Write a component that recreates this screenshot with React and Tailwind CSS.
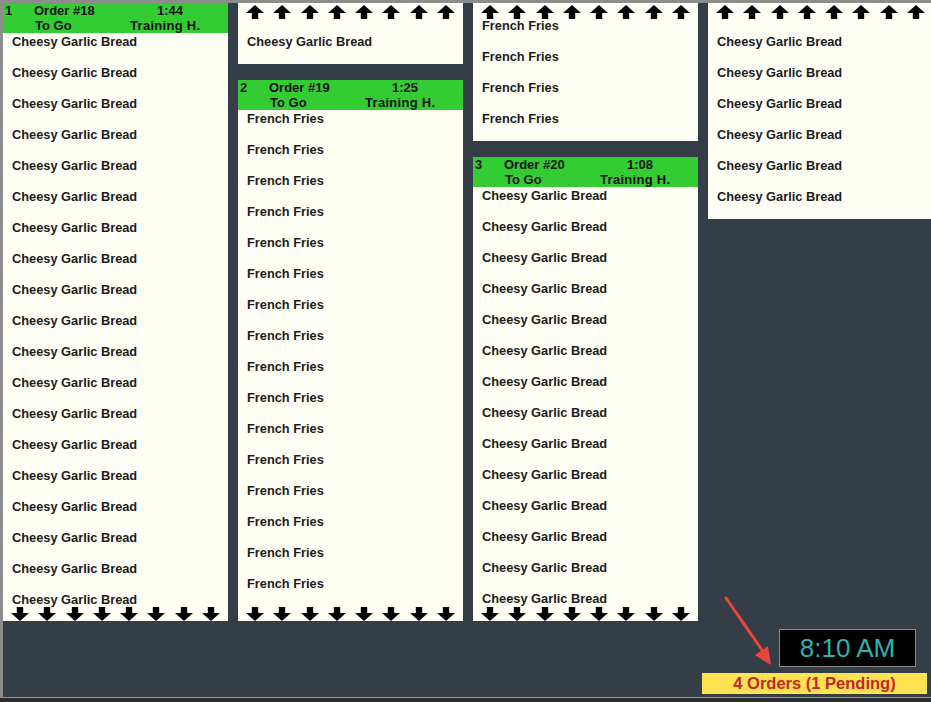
import React from 'react';

const ITEM_CGB = 'Cheesy Garlic Bread';
const ITEM_FF = 'French Fries';

const Arrow = ({ down }) => (
  <svg width="18" height="14" viewBox="0 0 18 14" className={down ? 'rotate-180' : ''}>
    <path d="M9 0 L18 8 H12.2 V14 H5.8 V8 H0 Z" fill="#000" />
  </svg>
);

const ArrowRow = ({ down }) => (
  <div className="flex gap-[9.3px] pl-[8px] h-[14px]">
    {Array.from({ length: 8 }).map((_, i) => (
      <Arrow key={i} down={down} />
    ))}
  </div>
);

const Item = ({ name }) => (
  <div className="h-[31px] shrink-0 pl-[9px] pt-[1px] text-[12.8px] font-bold leading-[15px] text-[#1c1c1c]">
    {name}
  </div>
);

const Header = ({ num, order, time }) => (
  <div className="h-[30px] shrink-0 bg-[#33cc33] text-[13px] font-bold leading-[15px] text-[#111]">
    <div className="flex">
      <span className="w-[31px] pl-[2px]">{num}</span>
      <span className="w-[123px]">Order #{order}</span>
      <span>{time}</span>
    </div>
    <div className="flex">
      <span className="w-[127px] pl-[32px]">To Go</span>
      <span className="tracking-[0.3px]">Training H.</span>
    </div>
  </div>
);

// top fragment of a ticket that continues from the previous column
const Continued = ({ items }) => (
  <div className="bg-[#fffff5] shrink-0">
    <div className="pt-[2px] pb-[14px]">
      <ArrowRow />
    </div>
    {items.map((it, i) => (
      <Item key={i} name={it} />
    ))}
  </div>
);

const Ticket = ({ num, order, time, items }) => (
  <div className="relative flex-1 min-h-0 overflow-hidden bg-[#fffff5] flex flex-col">
    <Header num={num} order={order} time={time} />
    {items.map((it, i) => (
      <Item key={i} name={it} />
    ))}
    <div className="absolute bottom-0 left-0 right-0">
      <ArrowRow down />
    </div>
  </div>
);

const fill = (name, n) => Array.from({ length: n }).map(() => name);

export default function App() {
  return (
    <div className="w-[931px] h-[702px] overflow-hidden bg-[#2b2b2b] font-['Liberation_Sans',Arial,sans-serif]">
      <div className="h-[698px] bg-[#353e47] border-t-[3px] border-l-[3px] border-[#8c8c8c] border-b border-b-[#9a9a9a] flex gap-[10px] items-start relative">
        <div className="w-[225px] h-[618px] shrink-0 flex flex-col">
          <Ticket num="1" order="18" time="1:44" items={fill(ITEM_CGB, 19)} />
        </div>

        <div className="w-[225px] h-[618px] shrink-0 flex flex-col gap-[16px]">
          <Continued items={[ITEM_CGB]} />
          <Ticket num="2" order="19" time="1:25" items={fill(ITEM_FF, 16)} />
        </div>

        <div className="w-[225px] h-[618px] shrink-0 flex flex-col gap-[16px]">
          <div className="bg-[#fffff5] shrink-0 pt-[2px]">
            <ArrowRow />
            <div className="-mt-[2px]">
              {fill(ITEM_FF, 4).map((it, i) => (
                <Item key={i} name={it} />
              ))}
            </div>
          </div>
          <Ticket num="3" order="20" time="1:08" items={fill(ITEM_CGB, 14)} />
        </div>

        <div className="w-[225px] h-[691px] shrink-0 flex flex-col">
          <Continued items={fill(ITEM_CGB, 6)} />
          <div className="flex-1" />
          <div className="ml-[71px] w-[137px] h-[38px] bg-black border border-[#8a8a8a] flex items-center justify-center text-[26px] text-[#2bb3b0] leading-none">
            8:10 AM
          </div>
          <div className="mt-[6px] -ml-[6px] w-[225px] h-[21px] bg-[#ffe24f] flex items-center justify-center text-[16.5px] font-bold text-[#c4262b]">
            4 Orders (1 Pending)
          </div>
        </div>

        <svg className="absolute left-[719px] top-[592px]" width="56" height="74" viewBox="0 0 56 74">
          <line x1="4" y1="3" x2="42" y2="58" stroke="#e8453c" strokeWidth="3" strokeLinecap="round" />
          <path d="M49 70 L33 60 L46 51 Z" fill="#e8453c" />
        </svg>
      </div>
    </div>
  );
}
